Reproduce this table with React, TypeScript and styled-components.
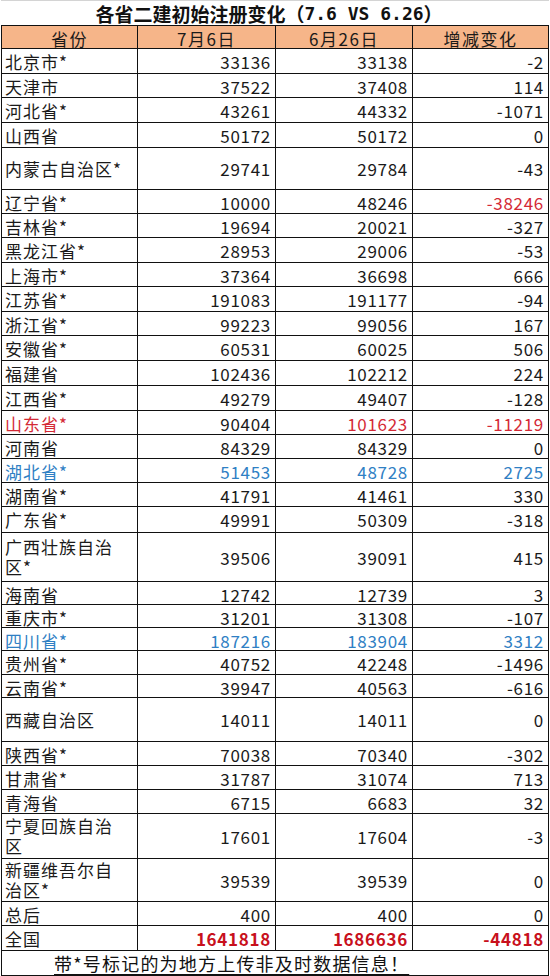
import React from 'react';
import styled, { createGlobalStyle } from 'styled-components';

type Tone = 'red' | 'blue' | 'total';

interface Region {
  name: string;
  jul: string;
  jun: string;
  diff: string;
  h: number;
  tone?: { name?: Tone; jul?: Tone; jun?: Tone; diff?: Tone };
}

const red: Region['tone'] = { name: 'red', jun: 'red', diff: 'red' };
const blue: Region['tone'] = { name: 'blue', jul: 'blue', jun: 'blue', diff: 'blue' };

// row heights follow the spreadsheet rows in the screenshot
const regions: Region[] = [
  { name: '北京市*', jul: '33136', jun: '33138', diff: '-2', h: 25 },
  { name: '天津市', jul: '37522', jun: '37408', diff: '114', h: 24 },
  { name: '河北省*', jul: '43261', jun: '44332', diff: '-1071', h: 25 },
  { name: '山西省', jul: '50172', jun: '50172', diff: '0', h: 25 },
  { name: '内蒙古自治区*', jul: '29741', jun: '29784', diff: '-43', h: 42 },
  { name: '辽宁省*', jul: '10000', jun: '48246', diff: '-38246', h: 24, tone: { diff: 'red' } },
  { name: '吉林省*', jul: '19694', jun: '20021', diff: '-327', h: 24 },
  { name: '黑龙江省*', jul: '28953', jun: '29006', diff: '-53', h: 25 },
  { name: '上海市*', jul: '37364', jun: '36698', diff: '666', h: 24 },
  { name: '江苏省*', jul: '191083', jun: '191177', diff: '-94', h: 25 },
  { name: '浙江省*', jul: '99223', jun: '99056', diff: '167', h: 24 },
  { name: '安徽省*', jul: '60531', jun: '60025', diff: '506', h: 25 },
  { name: '福建省', jul: '102436', jun: '102212', diff: '224', h: 25 },
  { name: '江西省*', jul: '49279', jun: '49407', diff: '-128', h: 25 },
  { name: '山东省*', jul: '90404', jun: '101623', diff: '-11219', h: 24, tone: red },
  { name: '河南省', jul: '84329', jun: '84329', diff: '0', h: 24 },
  { name: '湖北省*', jul: '51453', jun: '48728', diff: '2725', h: 24, tone: blue },
  { name: '湖南省*', jul: '41791', jun: '41461', diff: '330', h: 24 },
  { name: '广东省*', jul: '49991', jun: '50309', diff: '-318', h: 26 },
  { name: '广西壮族自治区*', jul: '39506', jun: '39091', diff: '415', h: 49 },
  { name: '海南省', jul: '12742', jun: '12739', diff: '3', h: 23 },
  { name: '重庆市*', jul: '31201', jun: '31308', diff: '-107', h: 23 },
  { name: '四川省*', jul: '187216', jun: '183904', diff: '3312', h: 23, tone: blue },
  { name: '贵州省*', jul: '40752', jun: '42248', diff: '-1496', h: 24 },
  { name: '云南省*', jul: '39947', jun: '40563', diff: '-616', h: 23 },
  { name: '西藏自治区', jul: '14011', jun: '14011', diff: '0', h: 44 },
  { name: '陕西省*', jul: '70038', jun: '70340', diff: '-302', h: 24 },
  { name: '甘肃省*', jul: '31787', jun: '31074', diff: '713', h: 24 },
  { name: '青海省', jul: '6715', jun: '6683', diff: '32', h: 24 },
  { name: '宁夏回族自治区', jul: '17601', jun: '17604', diff: '-3', h: 45 },
  { name: '新疆维吾尔自治区*', jul: '39539', jun: '39539', diff: '0', h: 43 },
  { name: '总后', jul: '400', jun: '400', diff: '0', h: 24 },
  {
    name: '全国',
    jul: '1641818',
    jun: '1686636',
    diff: '-44818',
    h: 25,
    tone: { jul: 'total', jun: 'total', diff: 'total' },
  },
];

const toneColor = (t?: Tone) =>
  t === 'red' ? '#d42a36' : t === 'blue' ? '#2f80c4' : t === 'total' ? '#c8101c' : '#1a1a1a';

const GlobalStyle = createGlobalStyle`
  html, body {
    margin: 0;
    padding: 0;
    background: #ffffff;
  }
  body {
    font-family: "Noto Sans CJK SC", "Noto Sans", sans-serif;
    color: #1a1a1a;
  }
`;

const Sheet = styled.div`
  width: 548px;
  margin-left: 1px;
  display: flex;
  flex-direction: column;
`;

const Title = styled.div`
  height: 25px;
  box-sizing: border-box;
  border-top: 1px solid #d4d4d4;
  display: flex;
  align-items: center;
  justify-content: center;
  padding-right: 12px;
  font-size: 19px;
  font-weight: 700;
  color: #111;
  white-space: nowrap;
`;

const Mono = styled.span`
  font-family: "DejaVu Sans Mono", "Liberation Mono", monospace;
  font-size: 18px;
  font-weight: 700;
`;

const Row = styled.div<{ $h: number; $head?: boolean }>`
  display: grid;
  grid-template-columns: 136px 138px 137px 136px;
  height: ${({ $h }) => $h}px;
  box-sizing: border-box;
  border-left: 1px solid #111;
  border-bottom: 1px solid #111;
  border-top: ${({ $head }) => ($head ? '1px solid #111' : 'none')};
  background: ${({ $head }) => ($head ? '#f6b589' : '#ffffff')};
`;

const HeadCell = styled.div`
  display: flex;
  align-items: center;
  justify-content: center;
  border-right: 1px solid #111;
  font-size: 17px;
  letter-spacing: 1.5px;
  color: #1a1a1a;
`;

const NameCell = styled.div<{ $tone?: Tone }>`
  display: flex;
  align-items: center;
  padding: 0 12px 0 3px;
  border-right: 1px solid #111;
  font-size: 17px;
  line-height: 20px;
  letter-spacing: 1px;
  color: ${({ $tone }) => toneColor($tone)};
`;

const NumCell = styled.div<{ $tone?: Tone }>`
  display: flex;
  align-items: center;
  justify-content: flex-end;
  padding-right: 4px;
  border-right: 1px solid #111;
  font-size: 17px;
  letter-spacing: 0.7px;
  font-weight: ${({ $tone }) => ($tone === 'total' ? 700 : 400)};
  color: ${({ $tone }) => toneColor($tone)};
`;

const Footer = styled.div`
  height: 25px;
  box-sizing: border-box;
  border-left: 1px solid #111;
  border-right: 1px solid #111;
  border-bottom: 1px solid #111;
  display: flex;
  align-items: center;
  padding-left: 52px;
  font-size: 18px;
  letter-spacing: 1.2px;
  color: #111;
  white-space: nowrap;
`;

const Note = styled.span`
  text-decoration: underline;
  text-underline-offset: 3px;
`;

export default function App() {
  return (
    <>
      <GlobalStyle />
      <Sheet>
        <Title>
          各省二建初始注册变化（<Mono>7.6 VS 6.26</Mono>）
        </Title>
        <Row $h={24} $head>
          <HeadCell>省份</HeadCell>
          <HeadCell>7月6日</HeadCell>
          <HeadCell>6月26日</HeadCell>
          <HeadCell>增减变化</HeadCell>
        </Row>
        {regions.map((r) => (
          <Row key={r.name} $h={r.h}>
            <NameCell $tone={r.tone?.name}>{r.name}</NameCell>
            <NumCell $tone={r.tone?.jul}>{r.jul}</NumCell>
            <NumCell $tone={r.tone?.jun}>{r.jun}</NumCell>
            <NumCell $tone={r.tone?.diff}>{r.diff}</NumCell>
          </Row>
        ))}
        <Footer>
          <Note>带*号标记的为地方上传非及时数据信息！</Note>
        </Footer>
      </Sheet>
    </>
  );
}
